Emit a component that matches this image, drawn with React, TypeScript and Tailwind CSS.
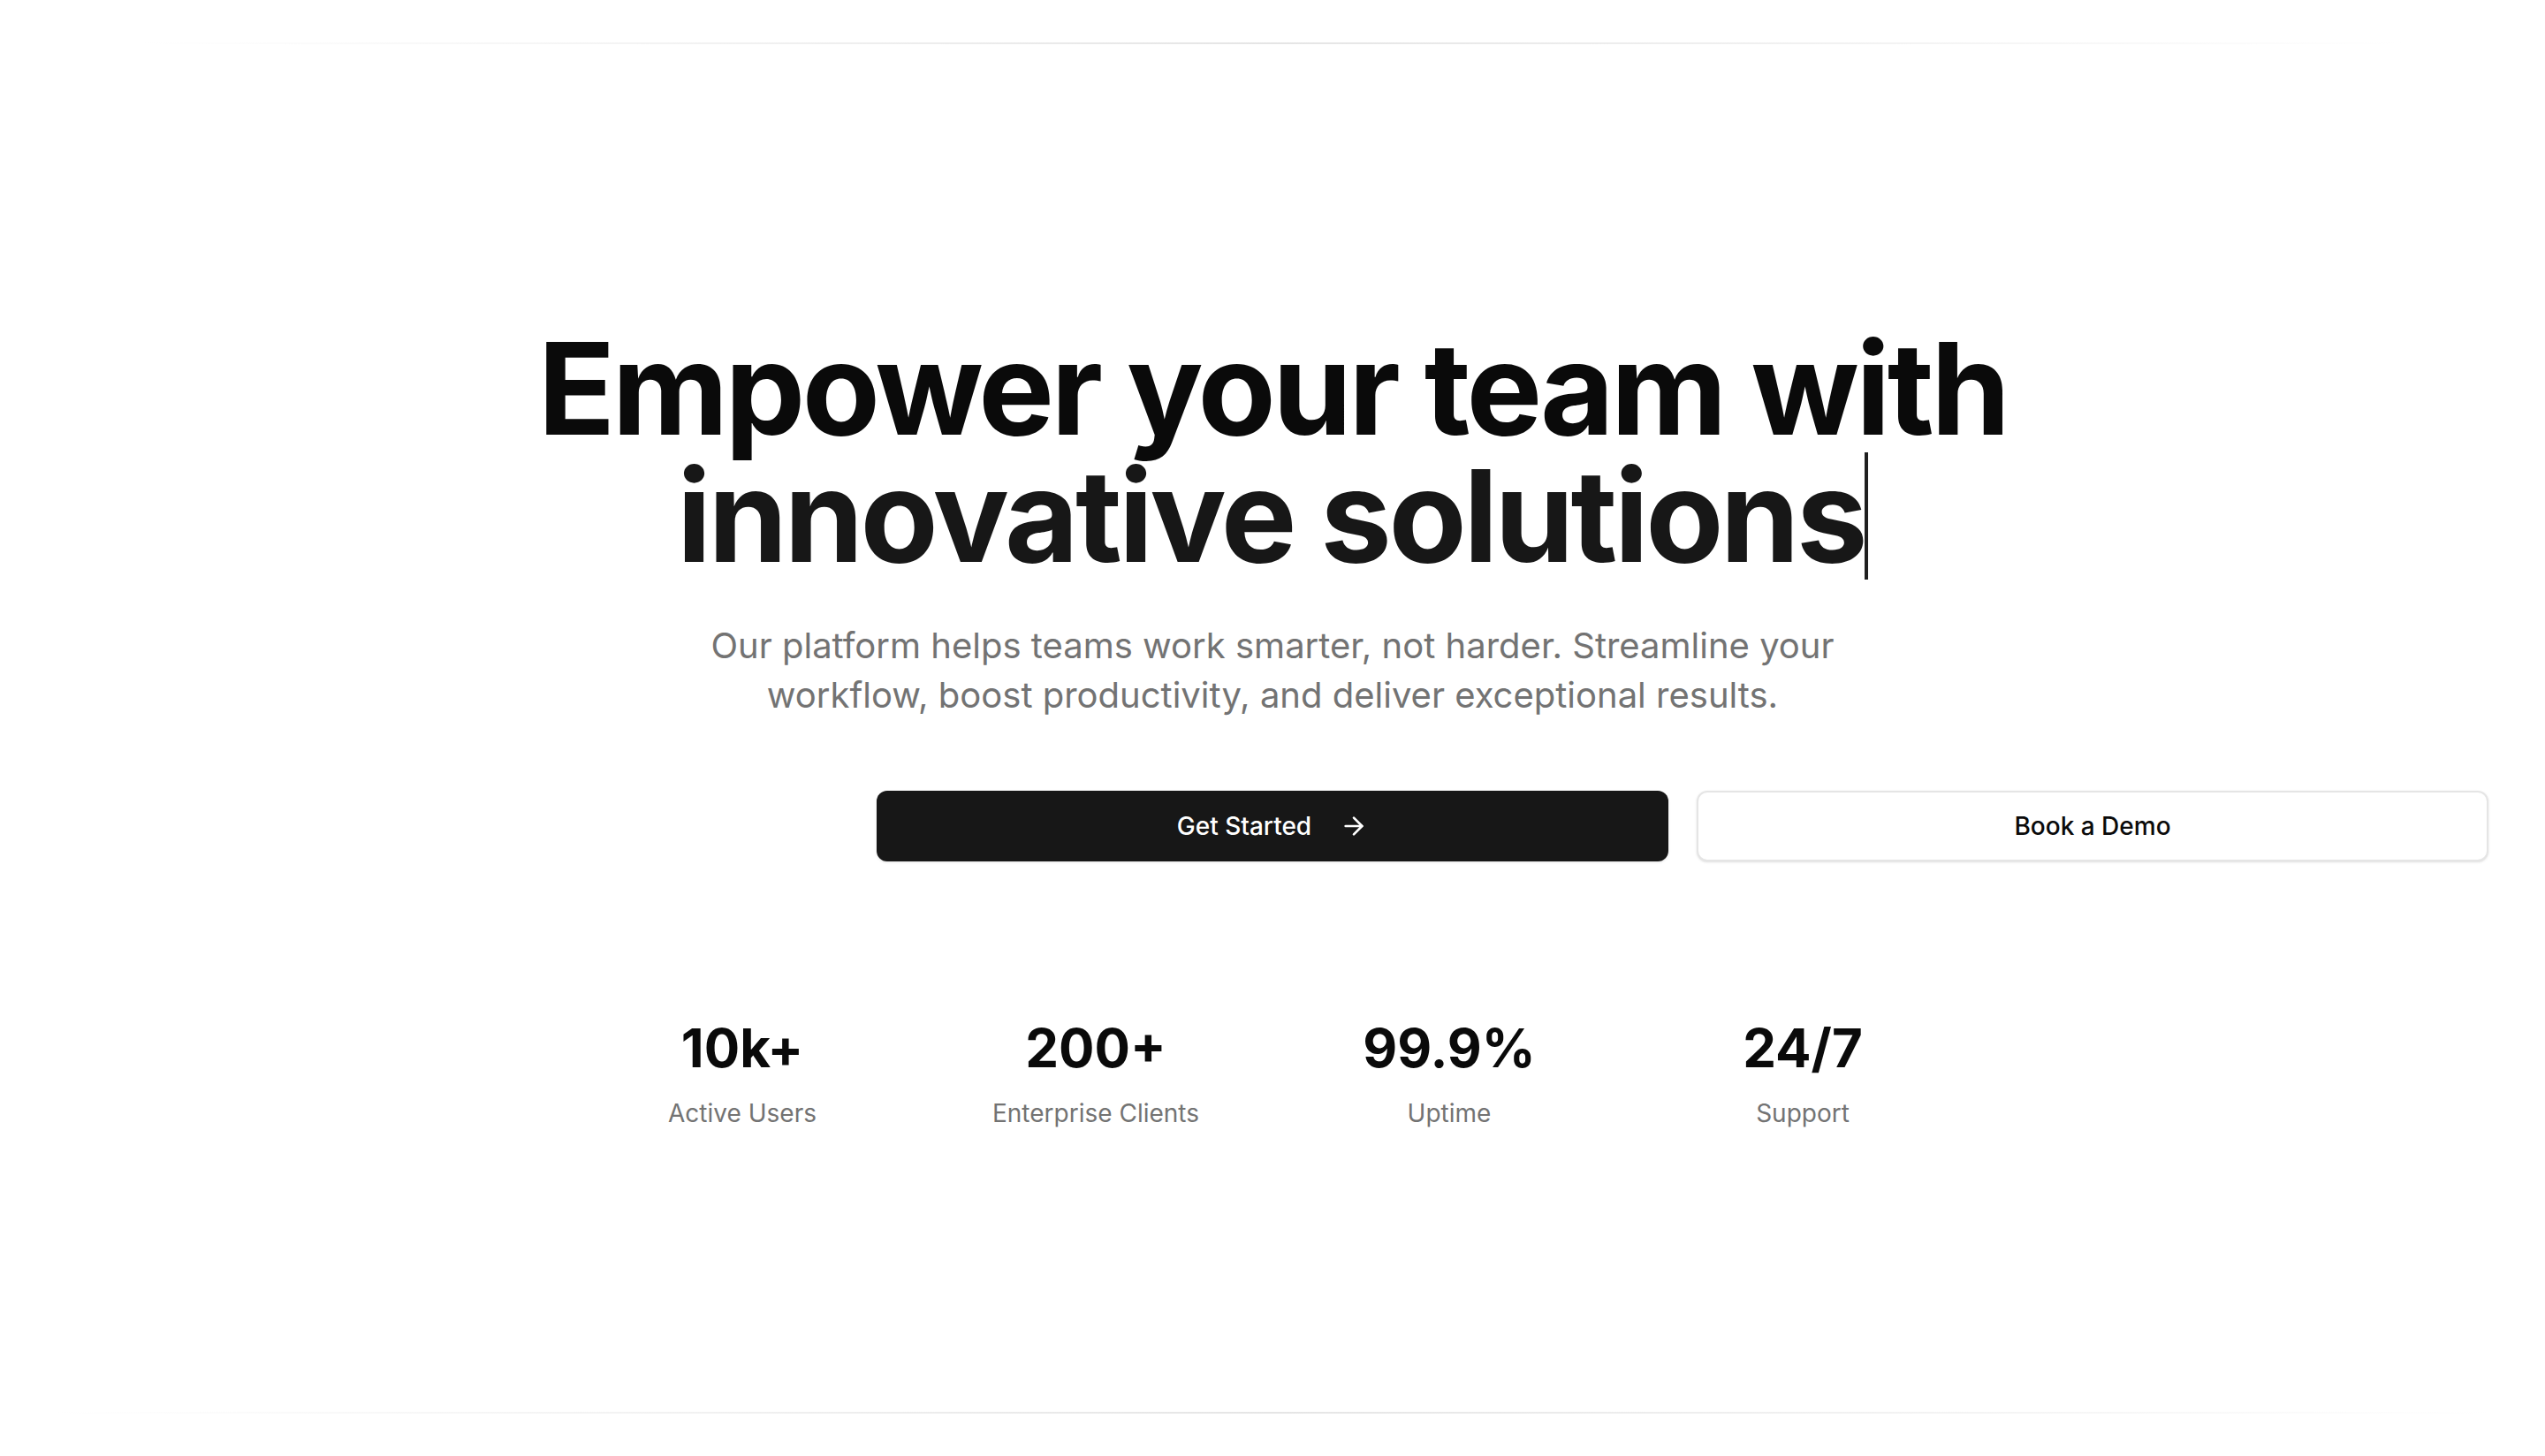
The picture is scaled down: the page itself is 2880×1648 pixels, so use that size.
import React from "react";
import { ArrowRight } from "lucide-react";

const stats = [
  { value: "10k+", label: "Active Users" },
  { value: "200+", label: "Enterprise Clients" },
  { value: "99.9%", label: "Uptime" },
  { value: "24/7", label: "Support" },
];

export default function App() {
  return (
    <div
      className="relative min-h-screen w-full overflow-hidden bg-white flex items-center justify-center"
      style={{ fontFamily: "Inter, 'Noto Sans', sans-serif" }}
    >
      <div className="absolute left-[160px] right-[160px] top-[48px] h-[2px] bg-linear-to-r from-transparent via-[#e5e5e5] to-transparent" />
      <div className="absolute left-[60px] right-[60px] bottom-[48px] h-[2px] bg-linear-to-r from-transparent via-[#e5e5e5] to-transparent" />

      <div className="flex flex-col items-center">
        <h1 className="text-center text-[144px] leading-[144px] font-bold tracking-tight">
          <span className="block text-[#0a0a0a]">Empower your team with</span>
          <span className="block text-[#171717]">
            innovative solutions
            <span className="inline-block w-[4px] h-[144px] align-top bg-[#1f1f1f]" />
          </span>
        </h1>

        <p className="mt-[47px] max-w-[1344px] text-center text-[40px] leading-[56px] text-[#737373]">
          Our platform helps teams work smarter, not harder. Streamline your workflow, boost
          productivity, and deliver exceptional results.
        </p>

        <div className="mt-[80px] flex w-full justify-center">
          <div className="flex w-[896px] gap-[32px]">
            <button className="flex h-[80px] w-full shrink-0 items-center justify-center gap-[32px] rounded-[12px] bg-[#171717] text-[28px] font-medium text-white shadow-sm">
              Get Started
              <ArrowRight className="h-[32px] w-[32px]" strokeWidth={2} />
            </button>
            <button className="flex h-[80px] w-full shrink-0 items-center justify-center rounded-[12px] border-[2px] border-[#e5e5e5] bg-white text-[28px] font-medium text-[#0a0a0a] shadow-sm">
              Book a Demo
            </button>
          </div>
        </div>

        <div className="mt-[175px] grid w-[1536px] grid-cols-4 gap-[64px]">
          {stats.map((s) => (
            <div key={s.label} className="flex flex-col items-center">
              <div className="text-[60px] leading-[72px] font-bold text-[#0a0a0a]">{s.value}</div>
              <div className="mt-[18px] text-[28px] leading-[40px] text-[#737373]">{s.label}</div>
            </div>
          ))}
        </div>
      </div>
    </div>
  );
}
